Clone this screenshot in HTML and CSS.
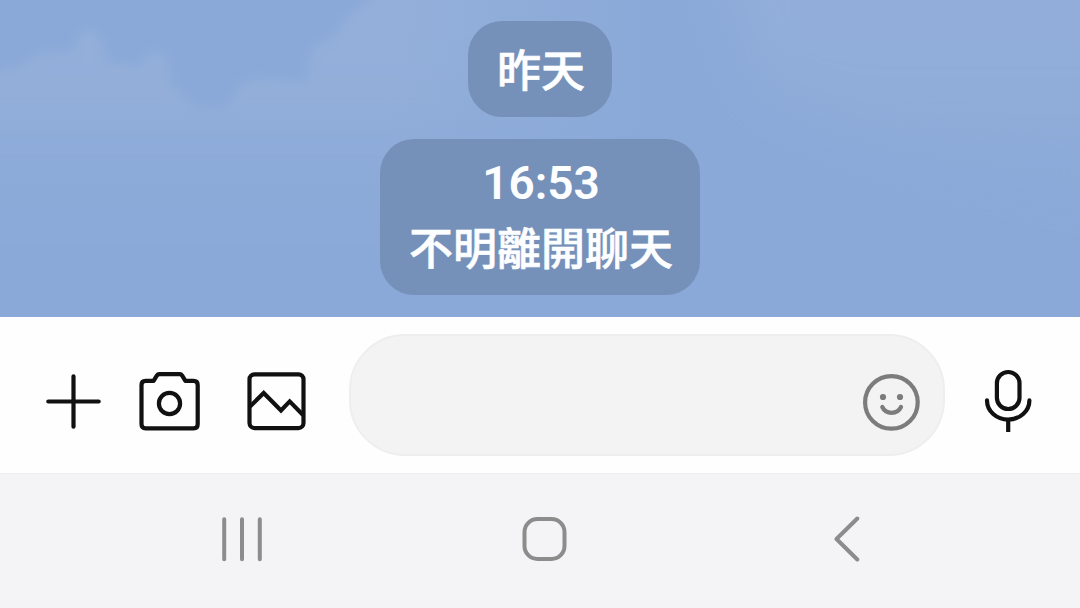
FILE: index.html
```html
<!DOCTYPE html>
<html lang="zh-Hant">

<head>
  <meta charset="utf-8" />
  <title>聊天</title>
  <link rel="stylesheet" href="styles.css">
</head>

<body>
  <div class="chat">
    <svg class="sky" viewBox="0 0 1080 317" aria-hidden="true">
      <defs>
        <linearGradient id="fade" x1="0" y1="0" x2="0" y2="317" gradientUnits="userSpaceOnUse">
          <stop offset="0" stop-color="#94afda" />
          <stop offset="0.3" stop-color="#92aed9" />
          <stop offset="0.8" stop-color="#8ba9d8" stop-opacity="0" />
        </linearGradient>
        <linearGradient id="side" x1="0" y1="0" x2="1080" y2="0" gradientUnits="userSpaceOnUse">
          <stop offset="0.36" stop-color="#8ba9d8" stop-opacity="0" />
          <stop offset="0.6" stop-color="#8ba9d8" />
        </linearGradient>
        <filter id="soft" x="-10%" y="-10%" width="120%" height="120%">
          <feGaussianBlur stdDeviation="5" />
        </filter>
        <filter id="softer" x="-20%" y="-20%" width="140%" height="140%">
          <feGaussianBlur stdDeviation="24" />
        </filter>
      </defs>
      <path class="cloud" filter="url(#soft)" d="M-20 76 L22 65 L38 53 L72 52 L80 34 L90 29 L101 38 L108 62 L140 66 L149 52 L164 54 L172 84 L196 108 L226 108 L240 84 L258 78 L305 82 L312 48 L334 36 L345 20 L374 -4 L400 -40 L660 -40 L660 317 L-20 317 Z" />
      <rect x="380" width="700" height="317" fill="url(#side)" />
      <path class="cloud faint" filter="url(#softer)" d="M715 -50 L1160 -50 L1160 220 L900 150 L760 90 Z" />
    </svg>
    <div class="notice">昨天</div>
    <div class="notice">
      <span class="time">16:53</span>
      <span>不明離開聊天</span>
    </div>
  </div>

  <div class="toolbar">
    <svg class="icon plus" viewBox="0 0 68 68">
      <path d="M33.5 9.3V59.7M8.3 34.5H58.7" />
    </svg>
    <svg class="icon camera" viewBox="0 0 68 68">
      <path d="M9.6 13.8H17.6L20.8 8.6Q21.7 7.2 23.4 7.2H43.6Q45.3 7.2 46.2 8.6L49.4 13.8H57.6Q61.7 13.8 61.7 17.9V57.3Q61.7 61.4 57.6 61.4H9.6Q5.5 61.4 5.5 57.3V17.9Q5.5 13.8 9.6 13.8Z" />
      <circle cx="33.5" cy="36.5" r="10.6" />
    </svg>
    <svg class="icon picture" viewBox="0 0 68 68">
      <rect x="7.5" y="7.3" width="54" height="53.8" rx="5" />
      <path class="sharp" d="M8 39.5L21.7 26L39 43.4L47.7 34.4L61 48" />
    </svg>
    <div class="field">
      <svg class="icon smile" viewBox="0 0 68 68">
        <circle cx="34.4" cy="35.4" r="26.3" />
        <circle class="eye" cx="26" cy="30" r="3.1" />
        <circle class="eye" cx="43" cy="30" r="3.1" />
        <path d="M25.3 40Q28 45.8 34.6 45.8T44 40" />
      </svg>
    </div>
    <svg class="icon mic" viewBox="0 0 68 68">
      <rect x="22.9" y="5" width="22.6" height="37" rx="11.3" />
      <path d="M13 33.4A21.2 19.2 0 0 0 55.4 33.4" />
      <path class="sharp" d="M34.2 53V65" />
    </svg>
  </div>

  <div class="navbar">
    <svg viewBox="0 0 48 48">
      <path d="M6.2 5.2V45.2M24 5.2V45.2M41.8 5.2V45.2" />
    </svg>
    <svg viewBox="0 0 48 48">
      <rect x="3.5" y="5" width="40" height="40" rx="13" />
    </svg>
    <svg viewBox="0 0 48 48">
      <path d="M34.3 4.5L13.5 25L34.3 45.5" />
    </svg>
  </div>
</body>

</html>
```

FILE: styles.css
```css
body {
  margin: 0;
  width: 1080px;
  height: 608px;
  overflow: hidden;
  font-family: Roboto, "Noto Sans CJK TC", sans-serif;
}

/* chat area */
.chat {
  position: relative;
  box-sizing: border-box;
  height: 317px;
  padding-top: 21px;
  display: flex;
  flex-direction: column;
  align-items: center;
  gap: 22px;
  background-color: #8ba9d8;
}

.sky {
  position: absolute;
  top: 0;
  left: 0;
  width: 1080px;
  height: 317px;
}

.cloud {
  fill: url(#fade);
}

.faint {
  opacity: 0.8;
}

.notice {
  position: relative;
  box-sizing: border-box;
  padding: 18px 27px 12px 29px;
  border-radius: 34px;
  display: flex;
  flex-direction: column;
  align-items: center;
  background-color: #7691b9;
  color: #fdfeff;
  font-size: 44px;
  font-weight: 500;
  line-height: 66px;
  -webkit-text-stroke: 0.6px #fdfeff;
}

.notice span {
  height: 66px;
}

.notice .time {
  height: 60px;
  font-size: 46px;
  font-weight: 600;
  line-height: 52px;
  -webkit-text-stroke: 0;
}

/* message bar */
.toolbar {
  box-sizing: border-box;
  height: 156px;
  padding-left: 40px;
  display: flex;
  align-items: center;
  background-color: #fefefe;
}

.icon {
  width: 68px;
  height: 68px;
  margin-top: 12px;
  flex: none;
  fill: none;
  stroke: #111;
  stroke-width: 4.2;
  stroke-linecap: round;
  stroke-linejoin: round;
}

.camera {
  margin-left: 28px;
}

.picture {
  margin-left: 38px;
}

.sharp {
  stroke-linecap: butt;
  stroke-linejoin: miter;
}

.field {
  box-sizing: border-box;
  width: 596px;
  height: 122px;
  margin-left: 39px;
  padding-right: 18px;
  border: 2px solid #eee;
  border-radius: 56px;
  display: flex;
  align-items: center;
  justify-content: flex-end;
  background-color: #f3f3f3;
}

.smile {
  stroke: #7c7c7c;
}

.eye {
  fill: #7c7c7c;
  stroke: none;
}

.mic {
  margin-left: 29px;
}

/* system buttons */
.navbar {
  box-sizing: border-box;
  height: 135px;
  padding: 40px 209px 0 218px;
  border-top: 1px solid #eee;
  display: flex;
  justify-content: space-between;
  background-color: #f4f4f6;
}

.navbar svg {
  width: 48px;
  height: 48px;
  fill: none;
  stroke: #8c8c8c;
  stroke-width: 4;
  stroke-linecap: round;
  stroke-linejoin: round;
}
```
